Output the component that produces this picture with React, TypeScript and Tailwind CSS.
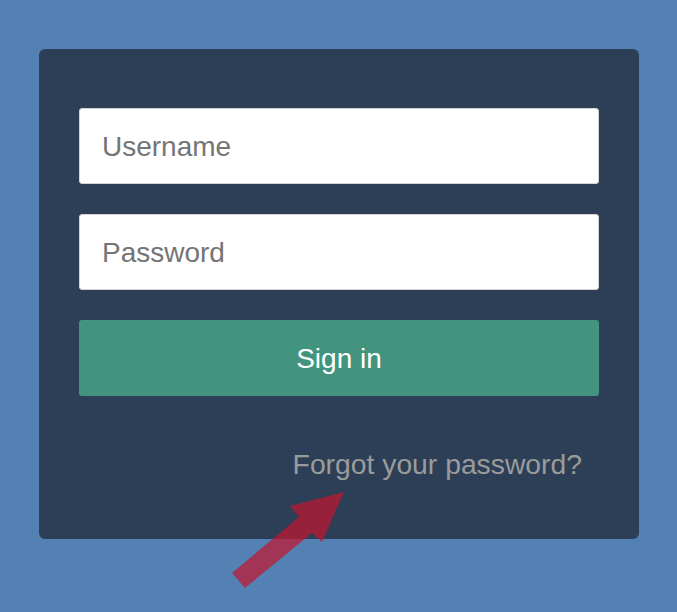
import React from "react";

const Arrow: React.FC = () => (
  <svg
    className="absolute left-0 top-0 pointer-events-none"
    width="677"
    height="612"
    viewBox="0 0 677 612"
  >
    <polygon
      points="344,492 322,542 312,533 245,588 232,573 299,517 290,506"
      fill="#c4142e"
      fillOpacity="0.7"
    />
  </svg>
);

const App: React.FC = () => {
  return (
    <div
      className="relative min-h-[612px] w-full bg-[#5381b3] pt-[49px] pl-[39px] pr-[38px]"
      style={{ fontFamily: '"Liberation Sans", Arial, sans-serif' }}
    >
      <form className="flex w-[600px] flex-col rounded-md bg-[#2c3f57] px-10 pt-[59px] pb-[59px]">
        <input
          type="text"
          placeholder="Username"
          className="h-[76px] w-full rounded-[3px] border border-[#d4d4d4] bg-white px-[22px] pt-[2px] text-[28px] text-[#555] placeholder:text-[#757575] outline-none"
        />
        <input
          type="password"
          placeholder="Password"
          className="mt-[30px] h-[76px] w-full rounded-[3px] border border-[#d4d4d4] bg-white px-[22px] pt-[2px] text-[28px] text-[#555] placeholder:text-[#757575] outline-none"
        />
        <button
          type="button"
          className="mt-[30px] h-[76px] w-full rounded-[3px] bg-[#42947f] pt-[2px] text-[28px] text-white"
        >
          Sign in
        </button>
        <div className="mt-[52px] flex justify-end pr-[17px]">
          <a href="#" className="text-[28.3px] leading-8 text-[#9b9b9b]">
            Forgot your password?
          </a>
        </div>
      </form>
      <Arrow />
    </div>
  );
};

export default App;
